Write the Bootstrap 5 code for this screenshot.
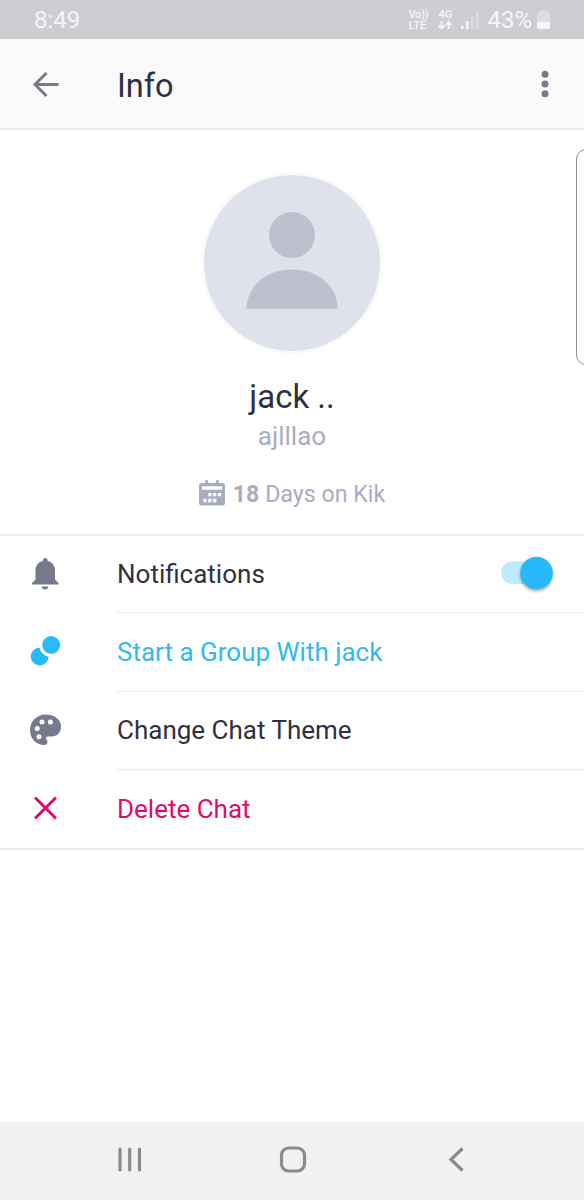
<!DOCTYPE html>
<html lang="en">
<head>
<meta charset="utf-8">
<meta name="viewport" content="width=device-width, initial-scale=1">
<title>Info</title>
<link rel="stylesheet" href="https://cdn.jsdelivr.net/npm/bootstrap@5.3.0/dist/css/bootstrap.min.css">
<style>
  body { font-family: Roboto, sans-serif; color: #2f3142; line-height: 1; background: #fff; overflow: hidden; }
  svg { display: block; flex: none; }
  .screen { height: 1200px; }
  .status { height: 39px; background: #cdced2; color: #f5f5f7; padding: 0 34px 0 34px; font-size: 24px; }
  .network { font-size: 11px; line-height: 11px; font-weight: 500; }
  .network-volte { width: 21px; letter-spacing: -.2px; }
  .network-volte div:last-child { letter-spacing: .1px; }
  .appbar { height: 91px; background: #fafafa; border-bottom: 2px solid #e9e9eb; padding: 0 31px 0 29px; }
  .appbar h1 { font-size: 32.5px; font-weight: 400; margin: 6px 0 0 56px; }
  .profile { height: 406px; border-bottom: 2px solid #ebebec; padding-top: 42px; }
  .avatar { width: 182px; height: 182px; border: 3px solid #fafafb; }
  .nickname { font-size: 33px; font-weight: 400; margin: 23px 0 0; }
  .handle { font-size: 26px; color: #a9adc2; margin-top: 6px; }
  .tenure { font-size: 23.2px; color: #a9adc2; margin-top: 31px; }
  .tenure-text { padding-top: 3px; }
  .edge-panel { top: 149px; right: -12px; width: 20px; height: 216px; border: 1px solid #8f8f92; border-radius: 10px; }
  .options { border-bottom: 2px solid #e9e9eb; }
  .option { height: 78px; border: 0; padding: 0; background: none; font-size: 26px; color: #2f3142; }
  .option-action { color: #32b9ef; }
  .option-danger { color: #e3096b; }
  .option-icon { width: 117px; padding-left: 28px; padding-bottom: 2px; }
  .option-label { border-bottom: 1.5px solid #ebebed; padding-right: 31px; }
  .option:first-child { height: 77px; }
  .option:nth-child(2), .option:nth-child(3) { height: 78.500px; }
  .option:last-child .option-label { border-bottom: 0; }
  .toggle { width: 53px; height: 34px; margin-top: -2px; }
  .softkeys { height: 78px; background: #f1f1f1; padding-bottom: 2px; }
</style>
<script src="https://cdn.jsdelivr.net/npm/bootstrap@5.3.0/dist/js/bootstrap.bundle.min.js"></script>
</head>
<body>
<div class="screen d-flex flex-column position-relative">
  <div class="status d-flex align-items-center">
    <span class="me-auto">8:49</span>
    <div class="network network-volte"><div>Vo))</div><div>LTE</div></div>
    <div class="network ms-2 text-center">
      <div>4G</div>
      <svg width="16" height="11" viewBox="0 0 16 11" fill="none" stroke="#f5f5f7" stroke-width="1.9"><path d="M4.500 1v7M1.500 5.500l3 3 3-3M11.500 9V2M8.500 4.800l3-3 3 3"/></svg>
    </div>
    <svg class="ms-2" width="18" height="20" fill="#f5f5f7"><path d="M0 16h2.500v3H0zM5 11h2.500v8H5z"/><path opacity=".35" d="M10 6h2.500v13H10zM15 1h2.500v18H15z"/></svg>
    <span class="ms-2">43%</span>
    <svg style="margin-left:5px" width="13" height="20" fill="#f5f5f7"><path opacity=".4" d="M3 1.500Q3 0 4.500 0h4Q10 0 10 1.500V2h1.500Q13 2 13 3.500V12H0V3.500Q0 2 1.500 2H3z"/><path d="M0 12h13v6q0 1-1 1H1q-1 0-1-1z"/></svg>
  </div>

  <header class="appbar d-flex align-items-center">
    <svg width="32" height="32" viewBox="0 0 32 32" fill="none" stroke="#777a8c" stroke-width="3"><path d="M29.500 16.500H6M17.500 5L6 16.500 17.500 28"/></svg>
    <h1>Info</h1>
    <svg class="ms-auto" width="16" height="30" fill="#777a8c"><circle cx="8" cy="5.300" r="3.500"/><circle cx="8" cy="15" r="3.500"/><circle cx="8" cy="24.800" r="3.500"/></svg>
  </header>

  <section class="profile d-flex flex-column align-items-center">
    <svg class="avatar rounded-circle" viewBox="0 0 176 176"><path fill="#dfe2ea" d="M0 0h176v176H0z"/><circle cx="88" cy="60" r="23" fill="#bdc0cf"/><path fill="#bdc0cf" d="M42.500 134C43 110 63 94.500 88 94.500s45.500 15.500 45.500 39.500z"/></svg>
    <h2 class="nickname">jack ..</h2>
    <div class="handle">ajlllao</div>
    <div class="tenure d-flex align-items-center gap-2">
      <svg width="26" height="26" viewBox="0 0 27 27"><path fill="#a9adc2" d="M6.500 3V1.500q0-1.500 1.500-1.500t1.500 1.500V3h8V1.500q0-1.500 1.500-1.500t1.500 1.500V3H24q3 0 3 3v17.500q0 3-3 3H3q-3 0-3-3V6q0-3 3-3z"/><path fill="#fff" d="M3 6.500h21V10H3zM9.500 13.500H13V17H9.500zM14.500 13.500H18V17h-3.500zM19.500 13.500H23V17h-3.500zM4.500 19.500H8V23H4.500zM9.500 19.500H13V23H9.500zM14.500 19.500H18V23h-3.500z"/></svg>
      <span class="tenure-text"><b class="fw-bold">18</b> Days on Kik</span>
    </div>
  </section>

  <div class="options list-group list-group-flush">
    <div class="option list-group-item d-flex">
      <div class="option-icon d-flex align-items-center">
        <svg width="34" height="34" viewBox="0 0 34 34" fill="#777a8c"><path d="M15 4V3q0-2 2.300-2t2.300 2v1C24.500 5 27 9 27 13v9.500l3.500 3.500v1.500H4V26l3.500-3.500V13C7.500 9 10 5 15 4zM13.500 29.500h7Q20 32.500 17 32.500t-3.500-3z"/></svg>
      </div>
      <div class="option-label flex-grow-1 d-flex align-items-center">
        <span class="me-auto">Notifications</span>
        <svg class="toggle overflow-visible" viewBox="0 0 53 34"><rect x="1" y="5.500" width="46" height="22.500" rx="11.250" fill="#bdeafe"/><circle cx="36.500" cy="17" r="16.300" fill="#28b9fb" style="filter:drop-shadow(0 2px 1.500px #0005)"/></svg>
      </div>
    </div>
    <div class="option option-action list-group-item d-flex">
      <div class="option-icon d-flex align-items-center">
        <svg width="34" height="34" viewBox="0 0 34 34" fill="#28bbfc"><circle cx="11.700" cy="22.500" r="9"/><circle cx="23.200" cy="11" r="10.500" stroke="#fff" stroke-width="3"/></svg>
      </div>
      <div class="option-label flex-grow-1 d-flex align-items-center">Start a Group With jack</div>
    </div>
    <div class="option list-group-item d-flex">
      <div class="option-icon d-flex align-items-center">
        <svg width="34" height="34" viewBox="0 0 34 34"><path fill="#777a8c" d="M17.500 1.500C26 1.500 33 6 33 13.500c0 6-4 10-9.500 10h-3.500c-2 0-2.500 1.500-1.500 3 1.500 2 1.500 5.500-2.500 5.500C8 32 2 25.500 2 17 2 8.500 9 1.500 17.500 1.500z"/><g fill="#fff"><circle cx="14" cy="9" r="2.500"/><circle cx="22.400" cy="9" r="2.500"/><circle cx="9.200" cy="15.600" r="2.500"/><circle cx="11" cy="23.800" r="2.500"/></g></svg>
      </div>
      <div class="option-label flex-grow-1 d-flex align-items-center">Change Chat Theme</div>
    </div>
    <div class="option option-danger list-group-item d-flex">
      <div class="option-icon d-flex align-items-center">
        <svg width="34" height="34" viewBox="0 0 34 34" fill="none" stroke="#e3096b" stroke-width="3"><path d="M7 6.500l21 21M28 6.500l-21 21"/></svg>
      </div>
      <div class="option-label flex-grow-1 d-flex align-items-center">Delete Chat</div>
    </div>
  </div>

  <nav class="softkeys mt-auto d-flex justify-content-center align-items-center">
    <svg width="366" height="30" viewBox="0 0 366 30" fill="none" stroke="#8b8b8b" stroke-width="3.200" stroke-linecap="round"><path d="M11 4v21M20.700 4v21M30.500 4v21"/><rect x="172.500" y="3" width="23" height="23" rx="7"/><path stroke-linecap="butt" d="M353.500 3.500L342 14.500l11.500 11"/></svg>
  </nav>

  <div class="edge-panel position-absolute"></div>
</div>
</body>
</html>
